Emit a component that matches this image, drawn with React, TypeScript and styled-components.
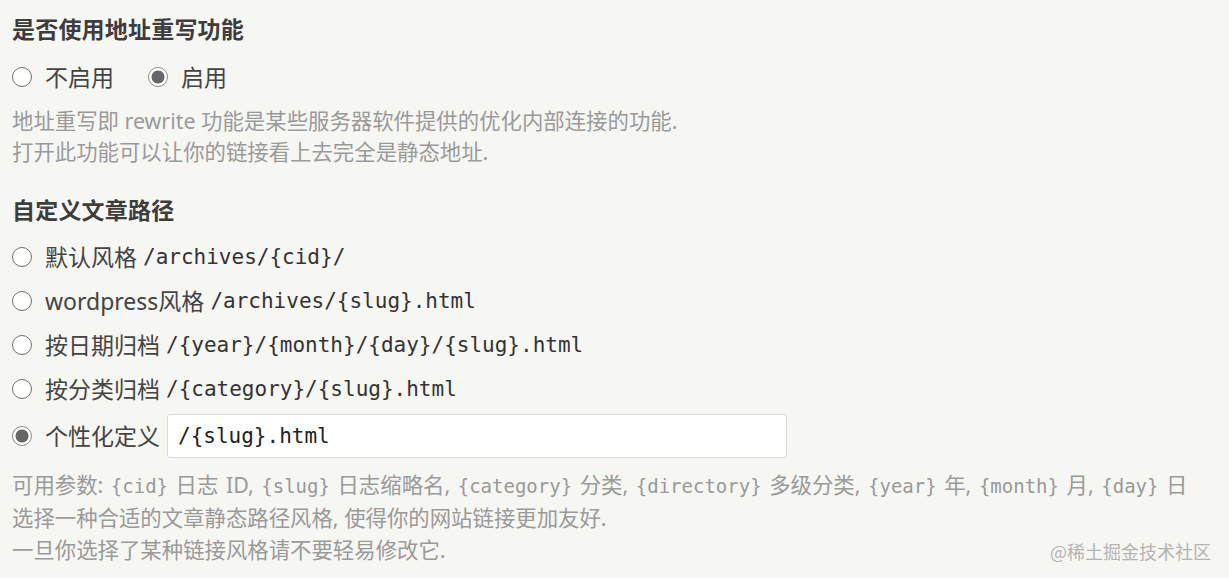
import React from "react";
import styled, { createGlobalStyle } from "styled-components";

const Global = createGlobalStyle`
  html, body { margin: 0; padding: 0; background: #f6f6f3; }
  body { font-family: "Noto Sans", "Noto Sans CJK SC", sans-serif; color: #444; }
`;

const Page = styled.div`
  position: relative;
  width: 1229px;
  height: 578px;
  box-sizing: border-box;
  padding: 14px 12px 0 12px;
  overflow: hidden;
`;

const Title = styled.h3<{ $mt?: number }>`
  margin: ${(p) => p.$mt ?? 0}px 0 0 0;
  font-size: 23px;
  font-weight: 700;
  line-height: 30px;
  color: #3d3d3d;
  letter-spacing: 0.2px;
`;

const InlineGroup = styled.div`
  display: flex;
  align-items: center;
  gap: 34px;
  height: 44px;
  margin-top: 11px;
`;

const List = styled.ul`
  list-style: none;
  margin: 10px 0 0 0;
  padding: 0;
  display: flex;
  flex-direction: column;
`;

const Item = styled.li<{ $tall?: boolean }>`
  display: flex;
  align-items: center;
  height: 44px;
  margin-top: ${(p) => (p.$tall ? 3 : 0)}px;
`;

const Option = styled.label`
  display: inline-flex;
  align-items: center;
  gap: 13px;
  font-size: 23px;
  color: #444;
  line-height: 30px;
  white-space: nowrap;
`;

const Radio = styled.input.attrs({ type: "radio" })`
  appearance: none;
  -webkit-appearance: none;
  margin: 0;
  width: 20px;
  height: 20px;
  flex: none;
  border-radius: 50%;
  border: 1.5px solid #6e6e6e;
  background: #fff;
  box-sizing: border-box;
  &:checked {
    border-color: #8a8a8a;
    background: radial-gradient(circle, #676767 0 6.2px, #fff 6.8px);
  }
`;

const Code = styled.code<{ $small?: boolean }>`
  font-family: "DejaVu Sans Mono", "Liberation Mono", monospace;
  font-size: ${(p) => (p.$small ? 19 : 21)}px;
  color: ${(p) => (p.$small ? "#999" : "#333")};
`;

const LabelText = styled.span`
  display: inline-flex;
  align-items: center;
  gap: 6px;
`;

const TextInput = styled.input`
  margin-left: 7px;
  width: 620px;
  height: 44px;
  box-sizing: border-box;
  border: 1px solid #d9d9d6;
  border-radius: 3px;
  background: #fff;
  padding: 0 10px;
  font-family: "DejaVu Sans Mono", "Liberation Mono", monospace;
  font-size: 21px;
  color: #222;
  outline: none;
`;

const Desc = styled.p<{ $mt: number }>`
  margin: ${(p) => p.$mt}px 0 0 0;
  font-size: 21.4px;
  line-height: ${(p) => (p.$mt > 8 ? 32 : 31)}px;
  color: #9a9a9a;
  white-space: nowrap;
`;

const Params = styled.span`
  word-spacing: 2px;
`;

const Watermark = styled.div`
  position: absolute;
  right: 18px;
  bottom: 14px;
  font-size: 18px;
  line-height: 26px;
  color: #b3b3b3;
  font-family: "Noto Sans CJK SC", sans-serif;
`;

const patterns: { label: React.ReactNode; code: string }[] = [
  { label: "默认风格", code: "/archives/{cid}/" },
  { label: "wordpress风格", code: "/archives/{slug}.html" },
  { label: "按日期归档", code: "/{year}/{month}/{day}/{slug}.html" },
  { label: "按分类归档", code: "/{category}/{slug}.html" },
];

export default function App() {
  return (
    <>
      <Global />
      <Page>
        <Title>是否使用地址重写功能</Title>
        <InlineGroup>
          <Option>
            <Radio name="rewrite" />
            不启用
          </Option>
          <Option>
            <Radio name="rewrite" defaultChecked />
            启用
          </Option>
        </InlineGroup>
        <Desc $mt={6}>
          地址重写即 rewrite 功能是某些服务器软件提供的优化内部连接的功能.
          <br />
          打开此功能可以让你的链接看上去完全是静态地址.
        </Desc>

        <Title $mt={28}>自定义文章路径</Title>
        <List>
          {patterns.map((p) => (
            <Item key={p.code}>
              <Option>
                <Radio name="postPattern" />
                <LabelText>
                  {p.label}
                  <Code>{p.code}</Code>
                </LabelText>
              </Option>
            </Item>
          ))}
          <Item $tall>
            <Option>
              <Radio name="postPattern" defaultChecked />
              个性化定义
            </Option>
            <TextInput defaultValue="/{slug}.html" />
          </Item>
        </List>
        <Desc $mt={11}>
          <Params>
            可用参数: <Code $small>{"{cid}"}</Code> 日志 ID, <Code $small>{"{slug}"}</Code> 日志缩略名,{" "}
            <Code $small>{"{category}"}</Code> 分类, <Code $small>{"{directory}"}</Code> 多级分类,{" "}
            <Code $small>{"{year}"}</Code> 年, <Code $small>{"{month}"}</Code> 月, <Code $small>{"{day}"}</Code> 日
          </Params>
          <br />
          选择一种合适的文章静态路径风格, 使得你的网站链接更加友好.
          <br />
          一旦你选择了某种链接风格请不要轻易修改它.
        </Desc>
        <Watermark>@稀土掘金技术社区</Watermark>
      </Page>
    </>
  );
}
